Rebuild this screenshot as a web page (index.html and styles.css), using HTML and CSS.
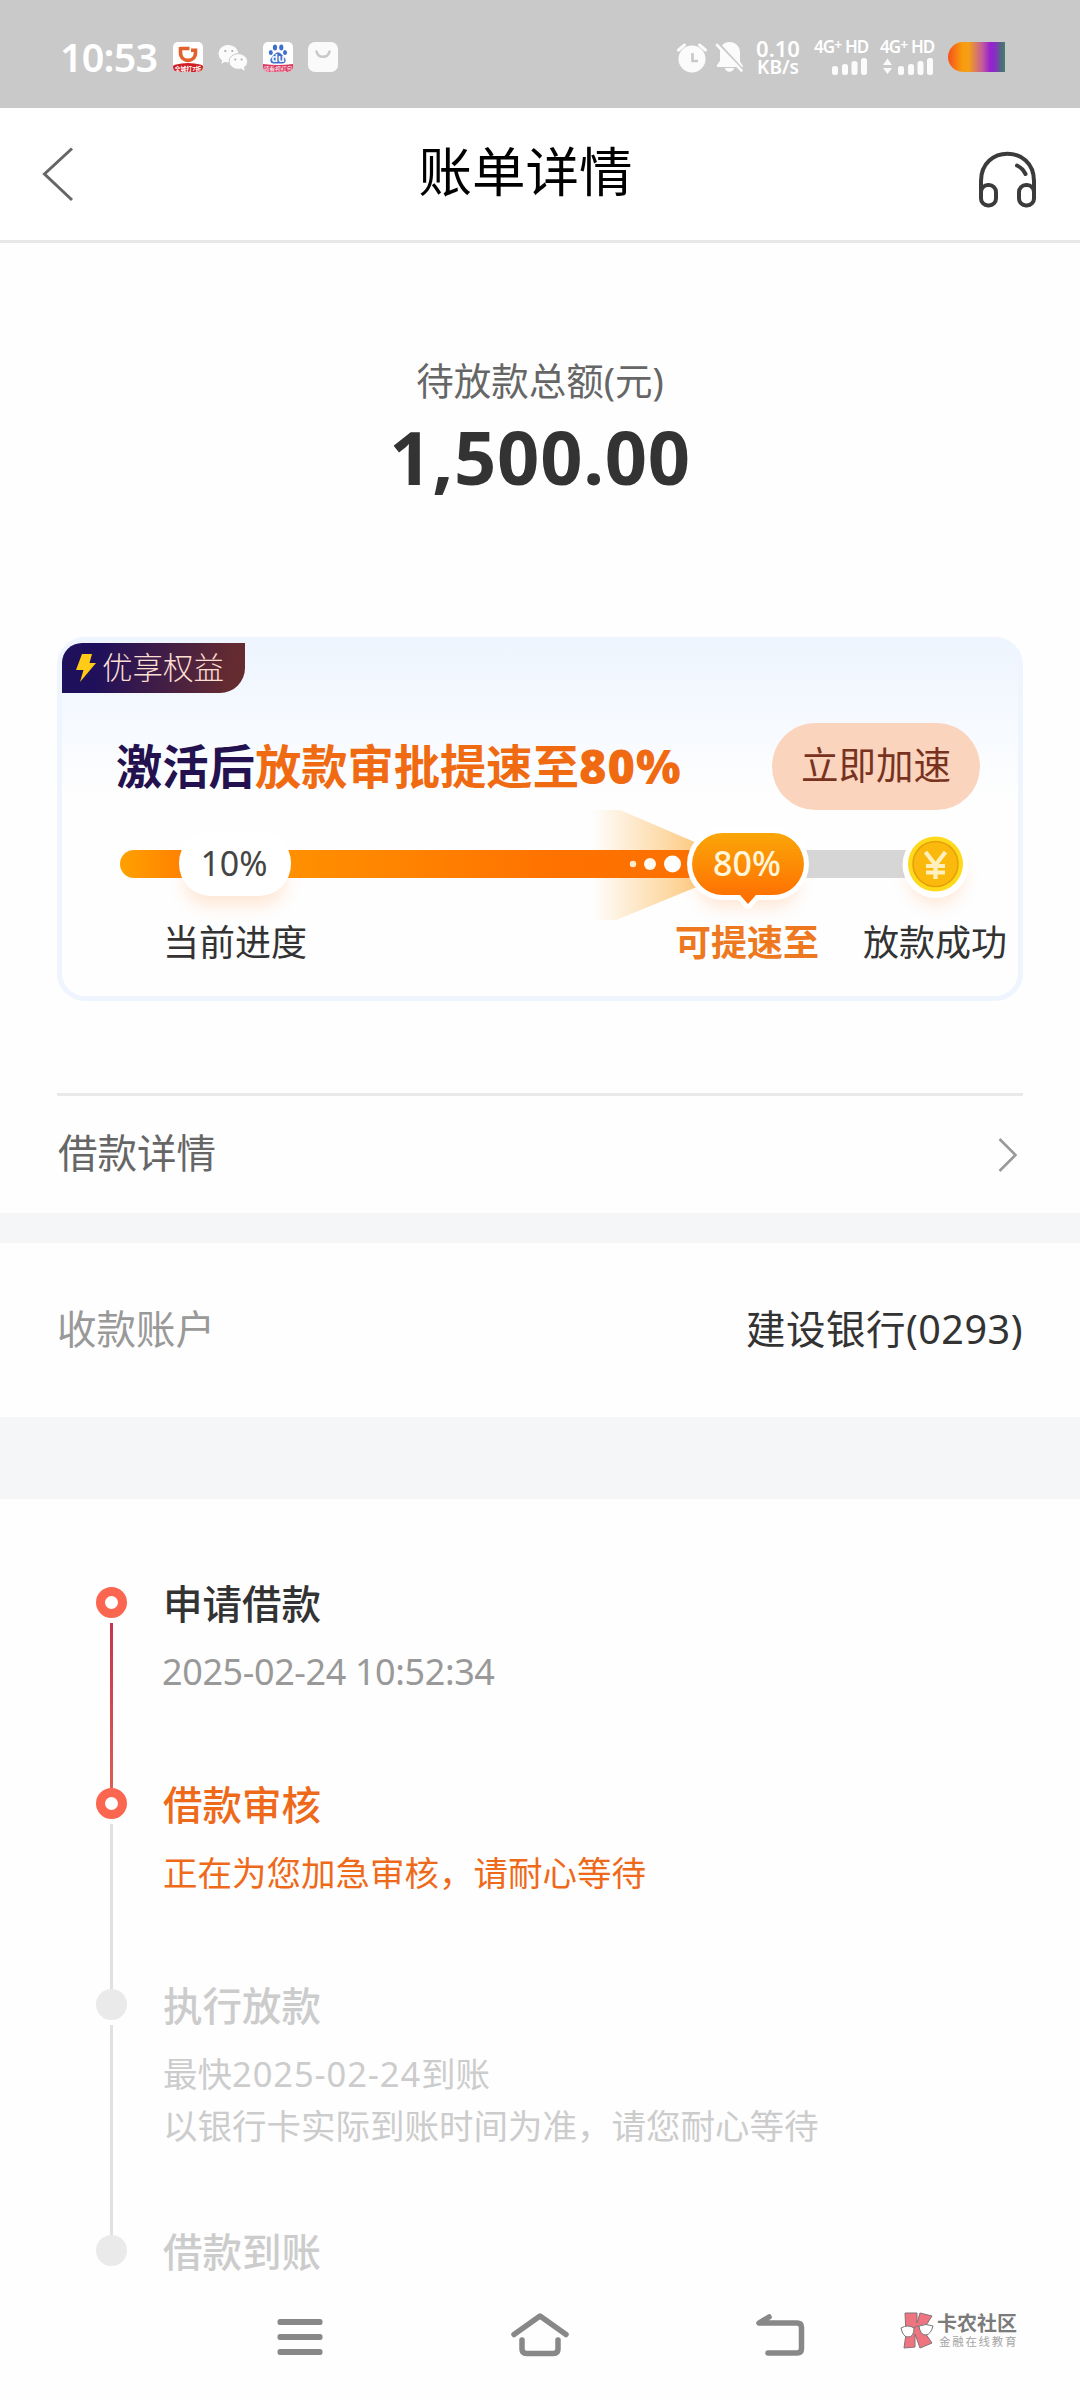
FILE: index.html
```html
<!DOCTYPE html>
<html lang="zh-CN">
<head>
<meta charset="utf-8">
<title>账单详情</title>
<link rel="stylesheet" href="styles.css">
</head>
<body>
<div class="screen">
  <header class="status">
    <span class="clock">10:53</span>
    <svg class="apps" width="166" height="32" viewBox="172 41 166 32">
      <defs>
        <clipPath id="app1"><rect x="173" y="42" width="30" height="30" rx="5"/></clipPath>
        <clipPath id="app2"><rect x="263" y="42" width="30" height="30" rx="5"/></clipPath>
      </defs>
      <g clip-path="url(#app1)">
        <rect x="173" y="42" width="30" height="30" fill="#fff"/>
        <path d="M180.500 48.500H189.500M180.500 47V52.500C180.500 63 195.500 63 195.500 52.500V50.200H191" fill="none" stroke="#e2602c" stroke-width="3.600"/>
        <ellipse cx="188" cy="68.500" rx="17" ry="5.500" fill="#cf1f26"/>
        <text class="app-tag" x="188" y="70.500" text-anchor="middle">全城打7折</text>
      </g>
      <g fill="#fbfbfb">
        <path d="M228.500 45c-5.500 0-9.800 3.900-9.800 8.700 0 2.700 1.400 5 3.600 6.600l-1 3.400 3.700-2c1.100.4 2.300.6 3.500.6z"/>
        <ellipse cx="228.500" cy="53.700" rx="9.800" ry="8.700"/>
        <ellipse cx="238.300" cy="61.500" rx="9.300" ry="7.900" stroke="#c9c9c9" stroke-width="1"/>
        <path d="M241 68.500l3.700 2.300-.8-4z"/>
        <g fill="#aaa"><circle cx="225.300" cy="51" r="1.100"/><circle cx="232.300" cy="51" r="1.100"/><circle cx="235.300" cy="59.500" r="1"/><circle cx="241.600" cy="59.500" r="1"/></g>
      </g>
      <g clip-path="url(#app2)">
        <rect x="263" y="42" width="30" height="30" fill="#fff"/>
        <g fill="#3f6fce">
          <ellipse cx="275" cy="47.500" rx="2.100" ry="2.900"/><ellipse cx="281.300" cy="47.500" rx="2.100" ry="2.900"/>
          <ellipse cx="270.800" cy="52.500" rx="2" ry="2.600"/><ellipse cx="285" cy="52.500" rx="2" ry="2.600"/>
          <path d="M278 52.500c3 0 4 2.500 6 4.500 3 3 1.500 6.500-1.500 6.500h-9c-3 0-4.500-3.500-1.500-6.500 2-2 3-4.500 6-4.500z"/>
        </g>
        <text class="app-du" x="278" y="62" text-anchor="middle">du</text>
        <path d="M263 64Q278 66 293 64V72H263z" fill="#d8395f"/>
        <text class="app-tag app-tag-thin" x="278" y="70.500" text-anchor="middle">领看视红包</text>
      </g>
      <rect x="308" y="42" width="30" height="30" rx="7" fill="#fafafa"/>
      <path d="M316.500 51.500C318 58.500 328 58.500 329.500 51.500" fill="none" stroke="#c9c9c9" stroke-width="2.600" stroke-linecap="round"/>
    </svg>
    <svg class="alerts" width="68" height="32" viewBox="676 41 68 32">
      <g fill="#fbfbfb">
        <circle cx="691" cy="59" r="13.500"/>
        <path d="M677.500 50L683.500 45M698.500 45L704.500 50" stroke="#fbfbfb" stroke-width="3" stroke-linecap="round"/>
        <path d="M691.500 53V61H697" fill="none" stroke="#c9c9c9" stroke-width="2.600"/>
        <path d="M728.500 42c6 0 10.500 4.500 10.500 10.500v9l3 4.500v1h-26v-2l3-4v-8.500c0-6 3.500-10.500 9.500-10.500zM724 68h9c-.5 5-8.500 5-9 0z"/>
      </g>
      <path d="M718 44L743 71" stroke="#c9c9c9" stroke-width="2.500"/>
      <path d="M716 45L740.500 70.500" stroke="#fbfbfb" stroke-width="2.600" stroke-linecap="round"/>
    </svg>
    <div class="speed"><span class="rate">0.10</span><span class="unit">KB/s</span></div>
    <div class="sim">
      <span class="net">4G<i>+</i> HD</span>
      <svg width="56" height="17" viewBox="0 0 56 17" fill="#fbfbfb"><rect x="18" y="8" width="6" height="9" rx="2.500"/><rect x="28" y="6" width="6" height="11" rx="2.500"/><rect x="37.500" y="3" width="6" height="14" rx="2.500"/><rect x="47" y="0" width="6" height="17" rx="2.500"/></svg>
    </div>
    <div class="sim">
      <span class="net">4G<i>+</i> HD</span>
      <svg width="56" height="17" viewBox="0 0 56 17" fill="#fbfbfb"><path d="M3 7L7.500.5 12 7zM3 10h9L7.500 16z"/><rect x="18" y="8" width="6" height="9" rx="2.500"/><rect x="28" y="6" width="6" height="11" rx="2.500"/><rect x="37.500" y="3" width="6" height="14" rx="2.500"/><rect x="47" y="0" width="6" height="17" rx="2.500"/></svg>
    </div>
    <span class="battery"></span>
  </header>

  <nav class="titlebar">
    <svg width="32" height="56" viewBox="42 146 32 56"><path d="M72 148.500L44.500 174 72 200" fill="none" stroke="#666" stroke-width="3"/></svg>
    <h1>账单详情</h1>
    <svg width="60" height="60" viewBox="978 150 60 60" fill="none" stroke="#3b3b3b" stroke-width="4">
      <path d="M981 199V181C981 144.500 1034 144.500 1034 181V199"/>
      <rect x="981" y="185" width="15" height="20.500" rx="7"/><rect x="1019" y="185" width="15" height="20.500" rx="7"/>
      <path d="M1017 165.500Q1022.500 168 1025.500 174" stroke-linecap="round"/>
    </svg>
  </nav>

  <section class="summary">
    <p class="summary-label">待放款总额(元)</p>
    <p class="amount">1,500.00</p>
  </section>

  <section class="card">
    <div class="tag">
      <svg width="22" height="30" viewBox="0 0 22 30"><path d="M7 1H17L14.500 10H21L5 29 8.500 17H1z" fill="#ffcb16"/></svg>
      <span>优享权益</span>
    </div>
    <div class="promo">
      <h2>激活后<em>放款审批提速至<b>80%</b></em></h2>
      <a class="boost">立即加速</a>
    </div>
    <svg class="progress" width="956" height="110" viewBox="62 810 956 110">
      <defs>
        <linearGradient id="start"><stop offset="0" stop-color="#ffa100"/><stop offset="1" stop-color="#ff7d00"/></linearGradient>
        <linearGradient id="run"><stop offset="0" stop-color="#ff9100"/><stop offset=".65" stop-color="#ff7200"/><stop offset="1" stop-color="#fb7000"/></linearGradient>
        <linearGradient id="beam"><stop offset="0" stop-color="#ffb44a" stop-opacity="0"/><stop offset="1" stop-color="#fbb44f" stop-opacity=".75"/></linearGradient>
        <linearGradient id="badge" x2="0" y2="1"><stop offset="0" stop-color="#fba608"/><stop offset="1" stop-color="#ff6b00"/></linearGradient>
        <filter id="soft" x="-50%" y="-50%" width="200%" height="220%"><feGaussianBlur stdDeviation="8"/></filter>
      </defs>
      <path d="M592 798L704 846V884L592 930z" fill="url(#beam)"/>
      <path d="M190 850H134a14 14 0 0 0 0 28H190z" fill="url(#start)"/>
      <rect x="280" y="850" width="424" height="28" fill="url(#run)"/>
      <rect x="790" y="850" width="125" height="28" fill="#d6d6d6"/>
      <g fill="#ff9a50" opacity=".22" filter="url(#soft)"><rect x="184" y="856" width="102" height="50" rx="25"/><rect x="697" y="858" width="102" height="50" rx="25"/><circle cx="936" cy="877" r="28"/></g>
      <rect x="179" y="831" width="112" height="65" rx="32" fill="#fff"/>
      <text class="pct" x="234" y="876" text-anchor="middle">10%</text>
      <circle cx="633" cy="864" r="3.200" fill="#ffeacb"/><circle cx="650" cy="864" r="6" fill="#fffaf0"/><circle cx="672.500" cy="864" r="8.500" fill="#fff"/>
      <path d="M723 833H773a31 31 0 0 1 0 62H756L748 904 740 895H723a31 31 0 0 1 0-62z" fill="#fff" stroke="#fff" stroke-width="10" stroke-linejoin="round"/>
      <path d="M723 833H773a31 31 0 0 1 0 62H756L748 904 740 895H723a31 31 0 0 1 0-62z" fill="url(#badge)"/>
      <text class="pct pct-on" x="747" y="876" text-anchor="middle">80%</text>
      <circle cx="935.500" cy="865" r="33" fill="#fff"/>
      <circle cx="935.500" cy="864" r="27.500" fill="#ffd91c"/>
      <circle cx="935.500" cy="864" r="22.500" fill="#fbb80d" stroke="#e4a007" stroke-width="1.500"/>
      <path d="M925.500 852L935.500 865 945.500 852M935.500 864V879M926 866H945M926 872.500H945" fill="none" stroke="#fff0bd" stroke-width="4.200"/>
    </svg>
    <div class="labels"><span>当前进度</span><strong>可提速至</strong><span>放款成功</span></div>
  </section>

  <section class="row row-detail">
    <span>借款详情</span>
    <svg width="24" height="36" viewBox="0 0 24 36"><path d="M3.500 2L19.500 18 3.500 34" fill="none" stroke="#999" stroke-width="2.600"/></svg>
  </section>
  <section class="row row-account">
    <span>收款账户</span>
    <span class="bank">建设银行(0293)</span>
  </section>

  <ol class="timeline">
    <li class="step done">
      <div class="rail"><i class="dot"></i><i class="line"></i></div>
      <div class="body"><h3>申请借款</h3><p class="time">2025-02-24 10:52:34</p></div>
    </li>
    <li class="step active">
      <div class="rail"><i class="dot"></i><i class="line"></i></div>
      <div class="body"><h3>借款审核</h3><p>正在为您加急审核，请耐心等待</p></div>
    </li>
    <li class="step tall">
      <div class="rail"><i class="dot"></i><i class="line"></i></div>
      <div class="body"><h3>执行放款</h3><p>最快<span class="date">2025-02-24</span>到账</p><p>以银行卡实际到账时间为准，请您耐心等待</p></div>
    </li>
    <li class="step last">
      <div class="rail"><i class="dot"></i></div>
      <div class="body"><h3>借款到账</h3></div>
    </li>
  </ol>

  <footer class="navbar">
    <svg width="46" height="38" viewBox="277 2318 46 38" fill="#888"><rect x="277.500" y="2319" width="45" height="6" rx="2.500"/><rect x="277.500" y="2334" width="45" height="6" rx="2.500"/><rect x="277.500" y="2349" width="45" height="6" rx="2.500"/></svg>
    <svg width="60" height="46" viewBox="510 2310 60 46" fill="none" stroke="#888" stroke-width="5.500" stroke-linecap="round" stroke-linejoin="round"><path d="M514 2333.500L540 2315 566 2333.500M522 2339V2348Q522 2352.500 526.500 2352.500H553.500Q558 2352.500 558 2348V2339"/></svg>
    <svg width="50" height="46" viewBox="755 2311 50 46" fill="none" stroke="#888" stroke-width="5.500" stroke-linecap="round" stroke-linejoin="round"><path d="M769 2316L759 2322H797Q801.500 2322 801.500 2326.500V2347.500Q801.500 2352 797 2352H768"/></svg>
    <div class="mark">
      <svg width="36" height="38" viewBox="899 2312 36 38">
        <path d="M905 2314h12v10l3-10 12 3-9 14 9 13-12 5-5-14v13l-11 1 2-14z" fill="#ee7580" stroke="#857176" stroke-width="1"/>
        <path d="M901 2329q7-4 13 0 0 9-6 9-5 0-7-9zM919 2327q7-3 14 0-2 8-7 9-6 0-7-9z" fill="#fff" stroke="#777" stroke-width="1"/><path d="M914 2329q2-3 5-1.500" fill="none" stroke="#777"/>
      </svg>
      <div><b>卡农社区</b><small>金融在线教育</small></div>
    </div>
  </footer>
</div>
</body>
</html>
```
FILE: styles.css
```css
* { box-sizing: border-box; margin: 0; padding: 0; }
body {
  width: 1080px;
  background: #fefefe;
  color: #333;
  font-family: "Noto Sans", "Noto Sans CJK SC", sans-serif;
}
svg { display: block; flex: none; }
h1, h2, h3 { font-weight: 400; }
.screen { width: 1080px; height: 2400px; display: flex; flex-direction: column; overflow: hidden; }
.screen > * { flex: none; }

/* system status bar */
.status { display: flex; align-items: center; height: 108px; padding: 6px 75px 0 60px; background: #c9c9c9; color: #fff; white-space: nowrap; }
.clock { width: 112px; font-size: 39.500px; font-weight: 600; line-height: 40px; letter-spacing: -0.800px; }
.app-tag { font-size: 5.800px; font-weight: 700; fill: #fff; }
.app-tag-thin { font-weight: 400; }
.app-du { font-size: 10px; font-weight: 700; fill: #fff; }
.alerts { margin-left: auto; }
.speed { display: flex; flex-direction: column; align-items: center; gap: 1px; width: 48px; margin-left: 9px; font-weight: 600; }
.rate { font-size: 22px; line-height: 20px; }
.unit { font-size: 19px; line-height: 17px; }
.sim { display: flex; flex-direction: column; gap: 3px; width: 56px; margin-left: 12px; }
.sim + .sim { margin-left: 10px; }
.net { font-size: 17px; font-weight: 600; line-height: 14px; letter-spacing: -0.9px; }
.net i { position: relative; top: -3px; font-size: 14px; font-style: normal; }
.battery { width: 57px; height: 30px; margin-left: 12px; border-radius: 15px 0 0 15px; background: linear-gradient(90deg, #f5511c 0, #f89b0c 25%, #f4a017 36%, #c35c9c 60%, #9722cf 74%, #8a2cc5 82%, #4a7076 95%, #43806a 100%); }

/* page title */
.titlebar { display: flex; justify-content: space-between; align-items: center; height: 135px; padding: 0 42px; border-bottom: 3px solid #e8e8e8; background: #fff; color: #000; }
.titlebar h1 { font-size: 53.500px; line-height: 60px; margin-bottom: 4px; margin-right: 1px; }
.titlebar svg:last-child { margin-top: 12px; }

.summary { height: 394px; padding-top: 111px; text-align: center; }
.summary-label { font-size: 37.500px; line-height: 54px; color: #666; }
.amount { margin-top: 9px; font-size: 74px; font-weight: 700; line-height: 80px; letter-spacing: 0.700px; }

/* acceleration offer */
.card { position: relative; width: 966px; height: 364px; margin: 0 57px; padding-top: 81px; border: 5px solid #eef5fe; border-radius: 28px; background: linear-gradient(#eef5fe, #f5f9ff 20%, #fefefe 44%); }
.tag { position: absolute; left: 0; top: 1px; display: flex; align-items: center; gap: 5px; width: 183px; height: 50px; padding-left: 13px; border-radius: 20px 0 25px 0; background: linear-gradient(100deg, #1f105b 20%, #642b31 90%); color: #fbdfd0; font-size: 30.500px; font-weight: 300; line-height: 46px; white-space: nowrap; }
.tag span { margin-bottom: 2px; }
.promo { display: flex; justify-content: space-between; align-items: center; height: 87px; padding: 0 38px 0 54px; white-space: nowrap; }
.promo h2 { color: #23124f; font-size: 46.300px; font-weight: 700; line-height: 60px; }
.promo em { color: #f06a12; font-style: normal; }
.promo b { font-size: 47px; letter-spacing: 1px; }
.boost { width: 208px; height: 87px; border-radius: 44px; background: #fbd4be; color: #78331f; font-size: 37.500px; line-height: 84px; text-align: center; }
.pct { font-size: 34px; fill: #444; }
.pct-on { fill: #fff6dc; font-weight: 500; }
.labels { display: flex; height: 44px; padding-left: 101px; font-size: 36px; line-height: 46px; white-space: nowrap; }
.labels strong { margin: 0 44px 0 368px; color: #ee7820; font-weight: 600; }

/* rows */
.row { display: flex; justify-content: space-between; align-items: center; font-size: 39.500px; line-height: 54px; white-space: nowrap; }
.row span { margin-bottom: 3px; }
.row-detail { height: 120px; margin: 92px 57px 0; padding: 0 3px 0 1px; border-top: 3px solid #e9e9e9; color: #666; }
.row-account { height: 286px; padding: 0 57px; border-top: 30px solid #f5f6f8; border-bottom: 82px solid #f5f6f8; color: #999; }
.row .bank { color: #333; letter-spacing: 0.500px; }

/* progress of the loan */
.timeline { display: flex; flex-direction: column; height: 765px; padding: 88px 0 0 96px; list-style: none; }
.step { display: flex; flex: none; gap: 36px; height: 201px; color: #ccc; white-space: nowrap; }
.tall { height: 246px; }
.last { height: 40px; }
.rail { display: flex; flex-direction: column; align-items: center; gap: 5px; width: 31px; }
.dot { flex: none; width: 31px; height: 31px; border-radius: 50%; background: #eaeaea; }
.line { flex: 1; width: 3px; background: #e1e1e1; }
.done .dot, .active .dot { border: 9px solid #fb6650; background: #fff; }
.done .line { background: linear-gradient(#c93350, #dc5d53); }
.body h3 { margin-bottom: 24px; font-size: 39.500px; font-weight: 500; line-height: 35px; }
.body p { font-size: 34.500px; line-height: 52px; }
.done h3 { color: #333; }
.body .time { color: #999; font-size: 36px; letter-spacing: -0.400px; margin-left: -1px; }
.date { letter-spacing: 0.900px; }
.active { color: #ee6a1a; }

/* system navigation */
.navbar { display: flex; align-items: center; height: 136px; padding: 10px 0 0 277px; }
.navbar svg:nth-child(2) { margin: -6px 0 0 187px; }
.navbar svg:nth-child(3) { margin: -5px 0 0 185px; }
.mark { display: flex; gap: 2px; margin: -14px 0 0 94px; color: #7b7b7b; white-space: nowrap; }
.mark svg:first-child { margin: 0; }
.mark div { display: flex; flex-direction: column; padding-top: 2px; }
.mark b { font-size: 20px; line-height: 22px; font-weight: 700; }
.mark small { padding-left: 2px; color: #a5a5a5; font-size: 11.500px; line-height: 14px; letter-spacing: 1.700px; }
```
